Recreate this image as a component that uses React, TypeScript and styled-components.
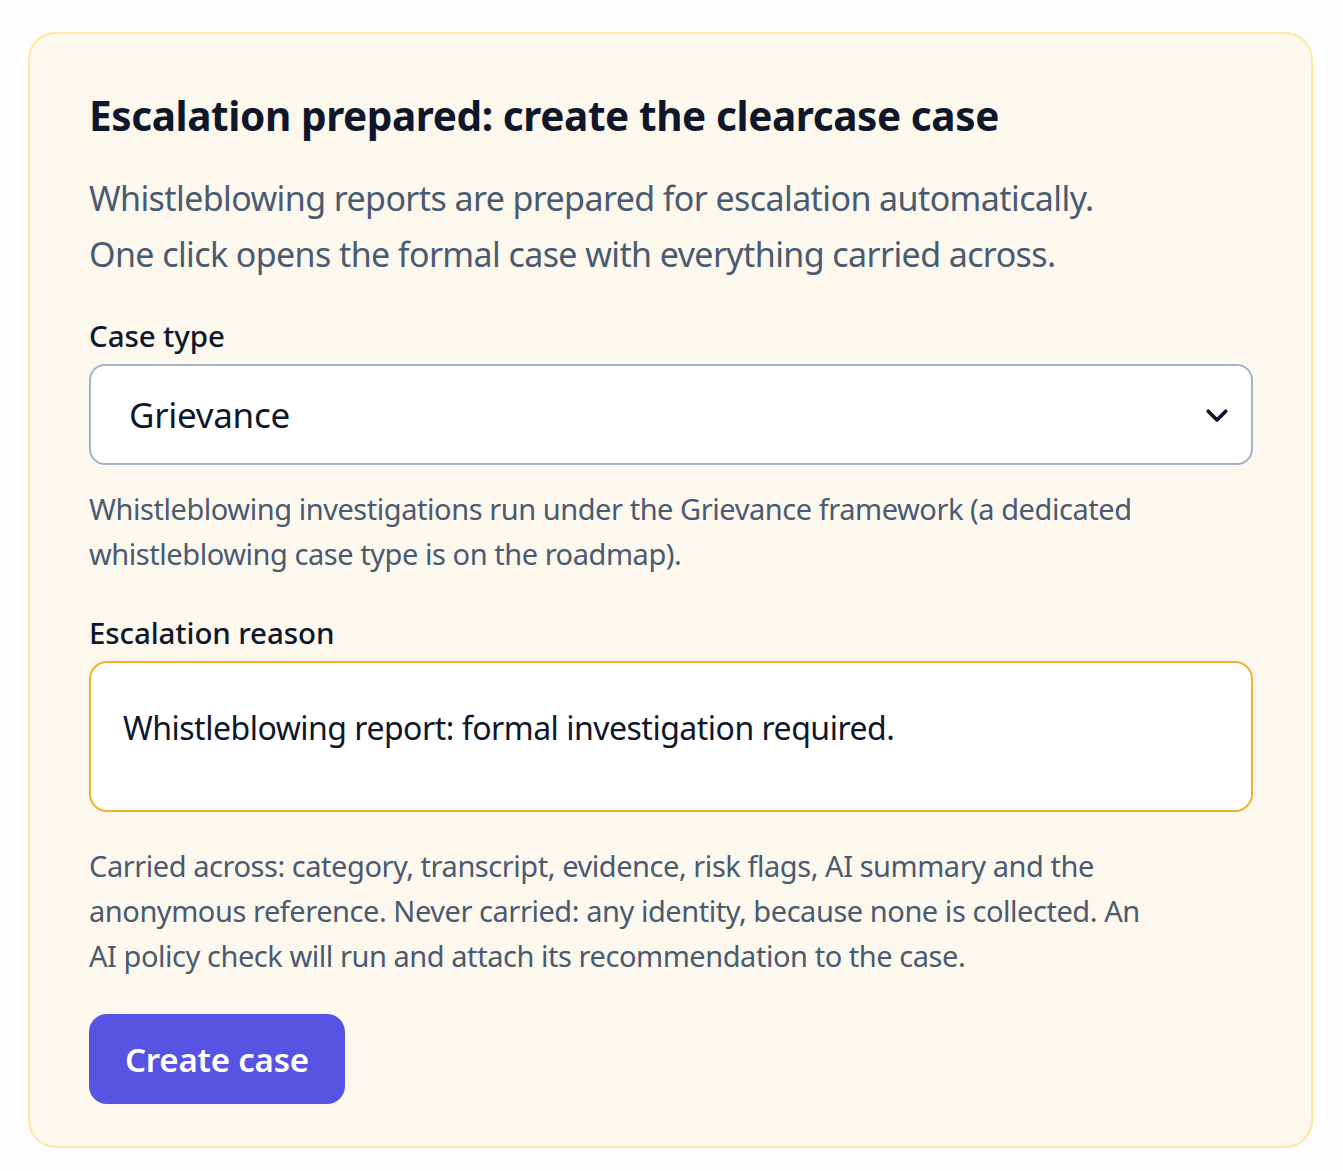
import React from 'react'
import styled, { createGlobalStyle } from 'styled-components'

const GlobalStyle = createGlobalStyle`
  body {
    margin: 0;
    background: #fdfdfd;
    font-family: "Noto Sans", "Open Sans", sans-serif;
  }
`

const Page = styled.div`
  padding: 32px 30px 24px 28px;
`

const Card = styled.section`
  background: #fdf8ee;
  border: 2px solid #fde6a2;
  border-radius: 28px;
  padding: 54px 58px 42px 59px;
`

const Title = styled.h1`
  margin: 0;
  font-size: 40.5px;
  line-height: 56px;
  font-weight: 700;
  color: #0f172a;
  letter-spacing: -0.4px;
`

const Lead = styled.p`
  margin: 26px 0 0;
  font-size: 34px;
  line-height: 56px;
  color: #4a5a70;
  letter-spacing: -0.6px;
`

const Field = styled.div`
  display: flex;
  flex-direction: column;
  margin-top: ${p => p.$top}px;
`

const Label = styled.label`
  font-size: 29.5px;
  line-height: 40px;
  font-weight: 500;
  color: #0f172a;
  letter-spacing: -0.1px;
  margin-bottom: 8px;
`

const SelectBox = styled.div`
  display: flex;
  align-items: center;
  height: 101px;
  box-sizing: border-box;
  background: #fff;
  border: 2px solid #a3b2c8;
  border-radius: 16px;
  padding: 0 38px;
  font-size: 35px;
  color: #0f172a;
  letter-spacing: -0.3px;
`

const Chevron = styled.svg`
  margin-left: auto;
  margin-right: -19px;
  width: 30px;
  height: 30px;
`

const Help = styled.p`
  margin: ${p => p.$top}px 0 0;
  font-size: 29px;
  line-height: 45px;
  color: #4a5a70;
  letter-spacing: -0.45px;
`

const ReasonBox = styled.div`
  height: 151px;
  box-sizing: border-box;
  background: #fff;
  border: 2px solid #efb22e;
  border-radius: 18px;
  padding: 40px 32px;
  font-size: 32px;
  line-height: 50px;
  color: #0f172a;
  letter-spacing: -0.5px;
`

const Button = styled.button`
  margin-top: 36px;
  height: 90px;
  padding: 0 36px;
  border: none;
  border-radius: 18px;
  background: #5754e4;
  color: #fff;
  font-family: inherit;
  font-size: 33px;
  font-weight: 600;
  letter-spacing: -0.2px;
  cursor: pointer;
`

export default function App() {
  return (
    <Page>
      <GlobalStyle />
      <Card>
        <Title>Escalation prepared: create the clearcase case</Title>
        <Lead>
          Whistleblowing reports are prepared for escalation automatically.
          <br />
          One click opens the formal case with everything carried across.
        </Lead>

        <Field $top={34}>
          <Label>Case type</Label>
          <SelectBox>
            Grievance
            <Chevron viewBox="0 0 24 24" fill="none" stroke="#0f172a" strokeWidth="3" strokeLinecap="round" strokeLinejoin="round">
              <path d="M5 9l7 7 7-7" />
            </Chevron>
          </SelectBox>
        </Field>
        <Help $top={21}>
          Whistleblowing investigations run under the Grievance framework (a dedicated
          <br />
          whistleblowing case type is on the roadmap).
        </Help>

        <Field $top={37}>
          <Label>Escalation reason</Label>
          <ReasonBox>Whistleblowing report: formal investigation required.</ReasonBox>
        </Field>
        <Help $top={31}>
          Carried across: category, transcript, evidence, risk flags, AI summary and the
          <br />
          anonymous reference. Never carried: any identity, because none is collected. An
          <br />
          AI policy check will run and attach its recommendation to the case.
        </Help>

        <Button>Create case</Button>
      </Card>
    </Page>
  )
}
